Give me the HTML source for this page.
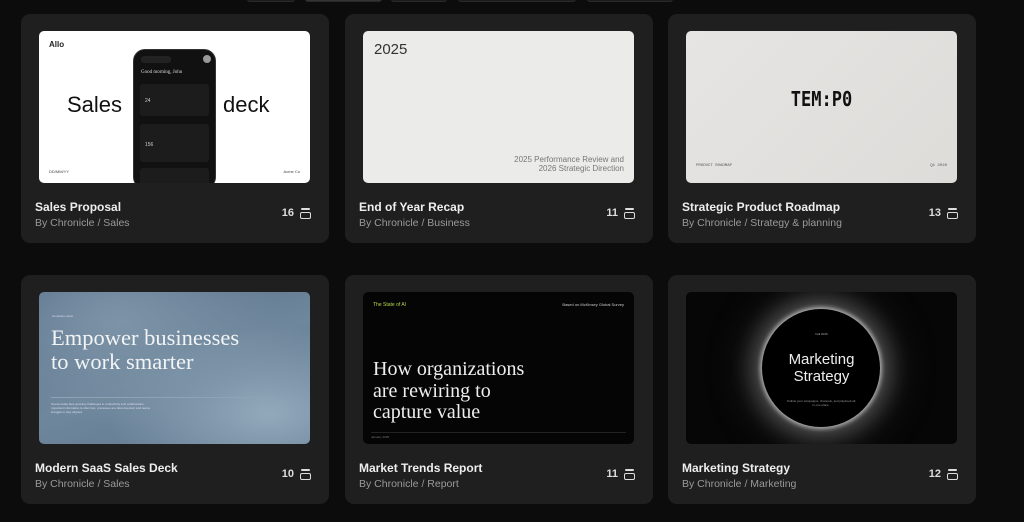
<!DOCTYPE html>
<html><head><meta charset="utf-8"><style>
*{margin:0;padding:0;box-sizing:border-box}
body{width:1024px;height:522px;background:#0c0c0c;position:relative;overflow:hidden;font-family:"Liberation Sans",sans-serif}
.pill{position:absolute;top:-4px;height:6px;border-radius:3px;background:#1c1c1c;border:1px solid #2a2a2a}
.card{position:absolute;width:308px;height:229px;background:#1f1f1f;border-radius:9px}
.th{position:absolute;left:18px;top:17px;width:271px;height:152px;border-radius:5px;overflow:hidden}
.t{position:absolute;left:14px;top:186px;color:#eee;font-size:12px;font-weight:bold}
.s{position:absolute;left:14px;top:203px;color:#9a9a9a;font-size:10.5px}
.n{position:absolute;right:18px;top:193px;color:#ddd;font-size:11px;font-weight:bold;display:flex;align-items:center;gap:6px}
.ic{width:11px;height:11px;position:relative}
.ic:before{content:"";position:absolute;left:1px;top:0;width:9px;height:2px;background:#ddd;border-radius:1px}
.ic:after{content:"";position:absolute;left:0;top:4px;width:11px;height:7px;border:1.5px solid #ddd;border-radius:2px;box-sizing:border-box}
.serif{font-family:"Liberation Serif",serif}
</style></head><body>
<div class="pill" style="left:247px;width:48px"></div>
<div class="pill" style="left:305px;width:77px;background:#333"></div>
<div class="pill" style="left:391px;width:56px"></div>
<div class="pill" style="left:458px;width:118px"></div>
<div class="pill" style="left:587px;width:86px"></div>

<div class="card" style="left:21px;top:14px">
 <div class="th" style="background:#fff">
  <div style="position:absolute;left:10px;top:9px;font-size:8px;font-weight:bold;color:#222">Allo</div>
  <div style="position:absolute;left:28px;top:61px;font-size:22px;color:#111">Sales</div>
  <div style="position:absolute;left:184px;top:61px;font-size:22px;color:#111">deck</div>
  <div style="position:absolute;left:10px;top:138px;font-size:4px;color:#444">DD/MM/YY</div>
  <div style="position:absolute;right:10px;top:138px;font-size:4px;color:#444">Acme Co</div>
  <div style="position:absolute;left:94px;top:18px;width:83px;height:140px;background:#111;border-radius:12px;border:1px solid #333">
   <div style="position:absolute;left:7px;top:6px;width:30px;height:7px;background:#222;border-radius:3px"></div>
   <div style="position:absolute;right:4px;top:5px;width:8px;height:8px;background:#999;border-radius:50%"></div>
   <div style="position:absolute;left:7px;top:20px;font-size:5px;color:#ddd" class="serif">Good morning, John</div>
   <div style="position:absolute;left:6px;top:34px;width:69px;height:32px;background:#1c1c1c;border-radius:3px"><span style="position:absolute;left:5px;top:14px;font-size:5px;color:#ccc">24</span></div>
   <div style="position:absolute;left:6px;top:74px;width:69px;height:38px;background:#1c1c1c;border-radius:3px"><span style="position:absolute;left:5px;top:18px;font-size:5px;color:#ccc">156</span></div>
   <div style="position:absolute;left:6px;top:118px;width:69px;height:25px;background:#1c1c1c;border-radius:3px"></div>
  </div>
 </div>
 <div class="t">Sales Proposal</div><div class="s">By Chronicle / Sales</div>
 <div class="n">16<span class="ic"></span></div>
</div>

<div class="card" style="left:345px;top:14px">
 <div class="th" style="background:#ebebea">
  <div style="position:absolute;left:11px;top:10px;font-size:15px;color:#333">2025</div>
  <div style="position:absolute;right:10px;top:124px;font-size:8px;color:#777;text-align:right;line-height:9px">2025 Performance Review and<br>2026 Strategic Direction</div>
 </div>
 <div class="t">End of Year Recap</div><div class="s">By Chronicle / Business</div>
 <div class="n">11<span class="ic"></span></div>
</div>

<div class="card" style="left:668px;top:14px">
 <div class="th" style="background:linear-gradient(135deg,#e6e5e3,#dedcd9)">
  <div style="position:absolute;left:0;width:100%;top:56px;text-align:center;font-family:'DejaVu Sans Mono',monospace;font-size:20px;font-weight:bold;color:#111;transform:scaleX(0.85)">TEM:P0</div>
  <div style="position:absolute;left:10px;top:133px;font-size:4px;color:#555;font-family:'Liberation Mono',monospace">PRODUCT ROADMAP</div>
  <div style="position:absolute;right:10px;top:133px;font-size:4px;color:#555;font-family:'Liberation Mono',monospace">Q1 2026</div>
 </div>
 <div class="t">Strategic Product Roadmap</div><div class="s">By Chronicle / Strategy &amp; planning</div>
 <div class="n">13<span class="ic"></span></div>
</div>

<div class="card" style="left:21px;top:275px">
 <div class="th" style="background:radial-gradient(ellipse at 30% 20%,#7d94a8,transparent 60%),radial-gradient(ellipse at 85% 80%,#93a9bb,transparent 50%),linear-gradient(160deg,#58708a,#6f879c 50%,#5f7891)">
  <div style="position:absolute;left:13px;top:22px;font-size:3px;color:#dde">Company name</div>
  <div class="serif" style="position:absolute;left:12px;top:34px;font-size:22.5px;line-height:24px;color:#f2f4f6">Empower businesses<br>to work smarter</div>
  <div style="position:absolute;left:12px;top:105px;width:225px;height:1px;background:#8fa3b5"></div>
  <div style="position:absolute;left:12px;top:110px;width:100px;font-size:3px;color:#dde;line-height:4px">Teams today face growing challenges in productivity and collaboration. Important information is often lost, processes are disconnected, and teams struggle to stay aligned.</div>
 </div>
 <div class="t">Modern SaaS Sales Deck</div><div class="s">By Chronicle / Sales</div>
 <div class="n">10<span class="ic"></span></div>
</div>

<div class="card" style="left:345px;top:275px">
 <div class="th" style="background:#050505">
  <div style="position:absolute;left:10px;top:10px;font-size:5px;color:#b6d94b">The State of AI</div>
  <div style="position:absolute;right:10px;top:10px;font-size:4px;color:#ccc">Based on McKinsey Global Survey</div>
  <div class="serif" style="position:absolute;left:10px;top:67px;font-size:20px;line-height:21.5px;color:#eee">How organizations<br>are rewiring to<br>capture value</div>
  <div style="position:absolute;left:8px;top:140px;width:255px;height:1px;background:#222"></div>
  <div style="position:absolute;left:8px;top:143px;font-size:3px;color:#777">January 2025</div>
 </div>
 <div class="t">Market Trends Report</div><div class="s">By Chronicle / Report</div>
 <div class="n">11<span class="ic"></span></div>
</div>

<div class="card" style="left:668px;top:275px">
 <div class="th" style="background:#060606">
  <div style="position:absolute;left:76px;top:17px;width:118px;height:118px;border-radius:50%;background:#000;box-shadow:0 0 4px 2px rgba(220,220,220,.7),0 0 22px 10px rgba(150,150,150,.45),0 0 40px 18px rgba(80,80,80,.3)"></div>
  <div style="position:absolute;left:0;width:100%;top:40px;text-align:center;font-size:3px;color:#aaa">Fall 2026</div>
  <div style="position:absolute;left:0;width:100%;top:59px;text-align:center;font-size:15px;line-height:17px;color:#eee">Marketing<br>Strategy</div>
  <div style="position:absolute;left:100px;width:70px;top:107px;text-align:center;font-size:3px;line-height:4px;color:#999">Outline your campaigns, channels, and playbook all in one place.</div>
 </div>
 <div class="t">Marketing Strategy</div><div class="s">By Chronicle / Marketing</div>
 <div class="n">12<span class="ic"></span></div>
</div>
</body></html>
